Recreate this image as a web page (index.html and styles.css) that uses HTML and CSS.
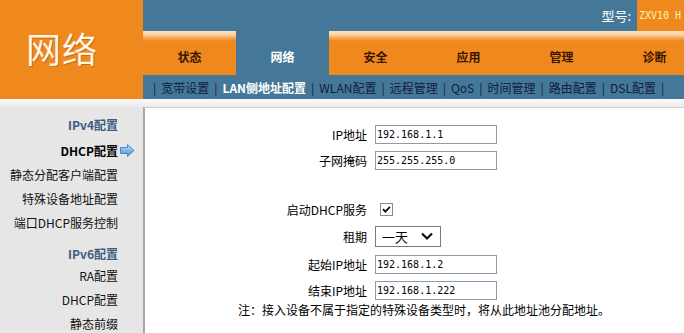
FILE: index.html
```html
<!DOCTYPE html>
<html lang="zh-CN">
<head>
    <meta charset="UTF-8">
    <title>网络 - LAN侧地址配置</title>
    <link rel="stylesheet" href="styles.css">
</head>
<body>
    <div class="header">
        <div class="logo">网络</div>
        <div class="nav">
            <div class="topbar">
                <span class="model-label">型号:</span>
                <span class="model">ZXV10 H</span>
            </div>
            <div class="tabs">
                <a class="tab">状态</a>
                <a class="tab active">网络</a>
                <a class="tab">安全</a>
                <a class="tab">应用</a>
                <a class="tab">管理</a>
                <a class="tab">诊断</a>
            </div>
            <div class="submenu">
                <span class="sep">|</span><a>宽带设置</a>
                <span class="sep">|</span><a class="current">LAN侧地址配置</a>
                <span class="sep">|</span><a>WLAN配置</a>
                <span class="sep">|</span><a>远程管理</a>
                <span class="sep">|</span><a>QoS</a>
                <span class="sep">|</span><a>时间管理</a>
                <span class="sep">|</span><a>路由配置</a>
                <span class="sep">|</span><a>DSL配置</a>
                <span class="sep">|</span>
            </div>
        </div>
    </div>
    <div class="strip"></div>
    <div class="main">
        <div class="sidebar">
            <div class="group">
                <div class="group-title">IPv4配置</div>
                <div class="item active">DHCP配置<span class="mark">
                    <svg width="15" height="13" viewBox="0 0 15 13">
                        <defs>
                            <linearGradient id="arr" x1="0" y1="0" x2="0" y2="1">
                                <stop offset="0" stop-color="#bfe2fb"/>
                                <stop offset="1" stop-color="#3d8fdc"/>
                            </linearGradient>
                        </defs>
                        <path d="M0.5 3.5 H7.5 V0.5 L14 6.5 L7.5 12.5 V9.5 H0.5 Z" fill="url(#arr)" stroke="#4f86c4" stroke-width="1"/>
                    </svg>
                </span></div>
                <div class="item">静态分配客户端配置<span class="mark"></span></div>
                <div class="item">特殊设备地址配置<span class="mark"></span></div>
                <div class="item">端口DHCP服务控制<span class="mark"></span></div>
            </div>
            <div class="group v6">
                <div class="group-title">IPv6配置</div>
                <div class="item">RA配置<span class="mark"></span></div>
                <div class="item">DHCP配置<span class="mark"></span></div>
                <div class="item">静态前缀<span class="mark"></span></div>
            </div>
        </div>
        <div class="content">
            <div class="row">
                <label>IP地址</label>
                <input class="text" type="text" value="192.168.1.1">
            </div>
            <div class="row">
                <label>子网掩码</label>
                <input class="text" type="text" value="255.255.255.0">
            </div>
            <div class="spacer"></div>
            <div class="row">
                <label>启动DHCP服务</label>
                <span class="check">
                    <svg width="13" height="13" viewBox="0 0 13 13">
                        <rect x="0.5" y="0.5" width="12" height="12" fill="#fff" stroke="#7c8d9c"/>
                        <path d="M3 6.2 L5.3 8.6 L10 3.8" fill="none" stroke="#111" stroke-width="1.8"/>
                    </svg>
                </span>
            </div>
            <div class="row tall">
                <label>租期</label>
                <span class="select">
                    <select>
                        <option>一天</option>
                        <option>一周</option>
                        <option>一小时</option>
                    </select>
                    <svg class="chevron" width="12" height="9" viewBox="0 0 12 9">
                        <path d="M1 1.5 L6 6.5 L11 1.5" fill="none" stroke="#111" stroke-width="2.2"/>
                    </svg>
                </span>
            </div>
            <div class="row">
                <label>起始IP地址</label>
                <input class="text" type="text" value="192.168.1.2">
            </div>
            <div class="row">
                <label>结束IP地址</label>
                <input class="text" type="text" value="192.168.1.222">
            </div>
            <p class="note">注：接入设备不属于指定的特殊设备类型时，将从此地址池分配地址。</p>
        </div>
    </div>
</body>
</html>
```

FILE: styles.css
```css
/* Global */
* {
    box-sizing: border-box;
    margin: 0;
    padding: 0;
}
body {
    font-family: "Noto Sans CJK SC", "DejaVu Sans", sans-serif;
    font-size: 12px;
    color: #000;
    background: #e6e6e6;
    width: 684px;
    height: 333px;
    overflow: hidden;
}
a {
    text-decoration: none;
    cursor: pointer;
}

/* Header */
.header {
    display: flex;
    height: 99px;
    background: #457898;
}
.logo {
    width: 143px;
    flex-shrink: 0;
    background: #ef891d;
    color: #fff6e6;
    font-size: 35px;
    line-height: 40px;
    padding: 28px 0 0 26px;
    letter-spacing: 1px;
    text-shadow: 1px 1px 0 rgba(120, 60, 0, 0.35);
}
.nav {
    flex: 1;
    display: flex;
    flex-direction: column;
    overflow: hidden;
}
.topbar {
    height: 31px;
    display: flex;
    justify-content: flex-end;
    align-items: stretch;
}
.model-label {
    color: #fff;
    font-size: 13px;
    line-height: 31px;
    padding-right: 6px;
}
.model {
    width: 47px;
    background: #ef891d;
    color: #fff2b0;
    font-family: "DejaVu Sans Mono", monospace;
    font-size: 10px;
    line-height: 31px;
    padding-left: 2px;
    white-space: nowrap;
    overflow: hidden;
}

/* Tabs */
.tabs {
    height: 44px;
    display: flex;
}
.tab {
    width: 93px;
    flex-shrink: 0;
    text-align: center;
    font-weight: bold;
    color: #3a1600;
    padding-top: 19px;
    line-height: 14px;
    background: linear-gradient(to bottom, #fde3c2 0, #fbd09e 4px, #f5a658 7px, #ef891d 10px, #ef891d 100%);
}
.tab.active {
    background: none;
    color: #fff;
}

/* Sub menu */
.submenu {
    height: 24px;
    display: flex;
    align-items: center;
    padding-left: 5px;
    white-space: nowrap;
    color: #10203a;
    font-size: 12px;
}
.submenu a {
    color: #10203a;
}
.submenu a.current {
    color: #fff;
    font-weight: bold;
}
.sep {
    margin: 0 5px;
    color: #10203a;
}

.strip {
    height: 8px;
    background: linear-gradient(to bottom, #f9f9f9, #ebebeb);
}

/* Main area */
.main {
    display: flex;
    height: 226px;
}
.sidebar {
    width: 143px;
    flex-shrink: 0;
    padding-top: 8px;
}
.group-title {
    text-align: right;
    padding-right: 25px;
    font-weight: bold;
    color: #3b5d7e;
    line-height: 20px;
    margin-bottom: 3px;
}
.group.v6 {
    margin-top: 11px;
}
.group.v6 .group-title {
    line-height: 18px;
    margin-bottom: 0;
}
.item {
    display: flex;
    justify-content: flex-end;
    align-items: center;
    height: 24px;
    color: #111;
}
.item.active {
    font-weight: bold;
    color: #000;
}
.mark {
    width: 25px;
    display: flex;
    align-items: center;
    padding-left: 2px;
}

/* Content form */
.content {
    flex: 1;
    background: #fff;
    border-left: 2px solid #a6a6a6;
    border-top: 1px solid #cfcfcf;
    padding-top: 13px;
}
.row {
    display: flex;
    align-items: center;
    height: 26px;
}
.row.tall {
    height: 29px;
}
.row label {
    width: 230px;
    flex-shrink: 0;
    text-align: right;
    padding-right: 8px;
}
.spacer {
    height: 23px;
}
.text {
    width: 122px;
    height: 19px;
    border: 1px solid #8d9ba8;
    background: #fff;
    font-family: "DejaVu Sans Mono", monospace;
    font-size: 10px;
    padding: 0 1px;
    color: #000;
    outline: none;
}
.check {
    display: flex;
    margin-left: 5px;
}
.select {
    position: relative;
    display: flex;
}
.select select {
    appearance: none;
    -webkit-appearance: none;
    width: 66px;
    height: 21px;
    border: 1px solid #7a7a7a;
    border-radius: 0;
    background: #fff;
    font-family: "Noto Sans CJK SC", sans-serif;
    font-size: 13px;
    padding-left: 6px;
    color: #000;
    outline: none;
}
.chevron {
    position: absolute;
    right: 8px;
    top: 6px;
    pointer-events: none;
}
.note {
    margin: 0 0 0 93px;
    line-height: 14px;
}
```
